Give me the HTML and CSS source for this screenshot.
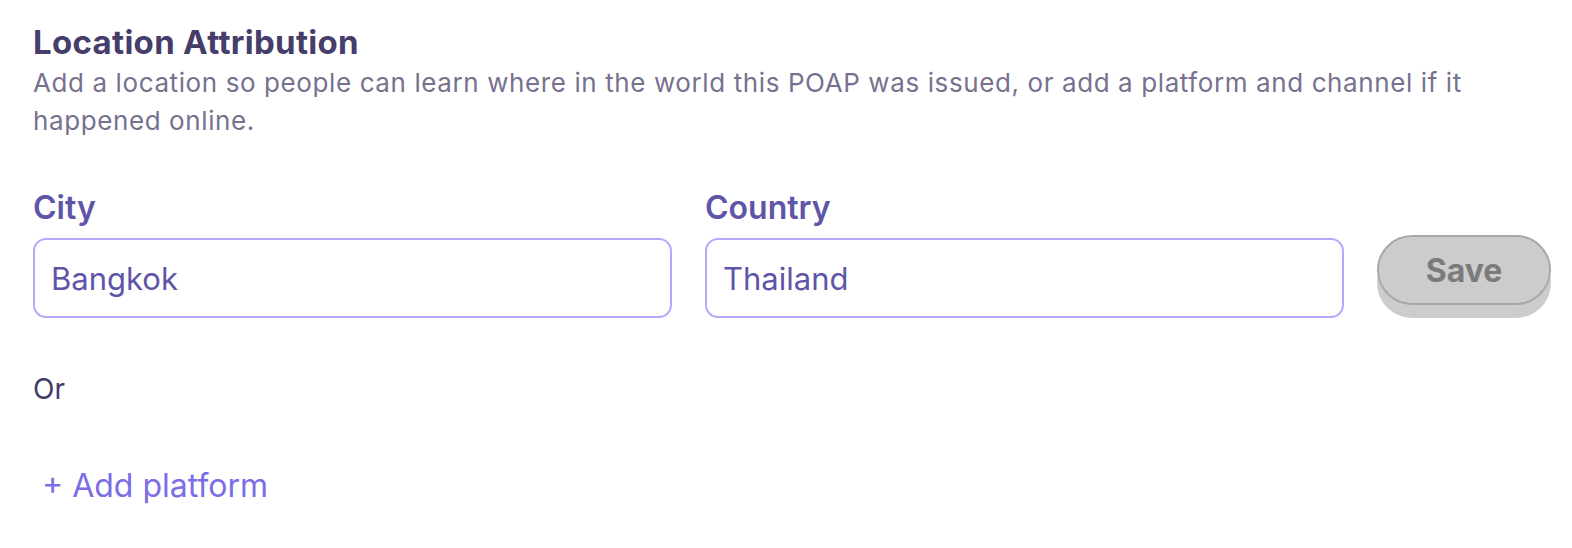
FILE: index.html
```html
<!DOCTYPE html>
<html lang="en">
<head>
<meta charset="utf-8">
<title>Location Attribution</title>
<link rel="stylesheet" href="styles.css">
</head>
<body>
<section class="panel">
  <h2 class="title">Location Attribution</h2>
  <p class="desc">Add a location so people can learn where in the world this POAP was issued, or add a platform and channel if it happened online.</p>
  <div class="row">
    <label class="field">
      <span class="label">City</span>
      <span class="input">Bangkok</span>
    </label>
    <label class="field">
      <span class="label">Country</span>
      <span class="input">Thailand</span>
    </label>
    <button class="save" type="button">Save</button>
  </div>
  <p class="or">Or</p>
  <button class="add" type="button">+ Add platform</button>
</section>
</body>
</html>
```
FILE: styles.css
```css
* { box-sizing: border-box; }
body {
  margin: 0;
  background: #ffffff;
  font-family: Inter, Roboto, "Liberation Sans", sans-serif;
}
.panel {
  padding: 22px 21px 0 33px;
}
.title {
  margin: 0;
  font-size: 33px;
  line-height: 40px;
  font-weight: 700;
  letter-spacing: 0.3px;
  color: #463d6b;
}
.desc {
  margin: 2px 0 0;
  font-size: 26px;
  line-height: 38px;
  letter-spacing: 0.6px;
  color: #77718f;
  max-width: 1500px;
}
.row {
  display: flex;
  align-items: flex-end;
  gap: 33px;
  margin-top: 49px;
}
.field {
  flex: 1;
  display: flex;
  flex-direction: column;
}
.label {
  font-size: 32px;
  line-height: 38px;
  font-weight: 600;
  color: #5e55a8;
  margin-bottom: 11px;
}
.input {
  display: flex;
  align-items: center;
  height: 80px;
  padding-left: 16px;
  border: 2px solid #b4aafc;
  border-radius: 13px;
  font-size: 31px;
  color: #5e55a8;
}
.save {
  flex: none;
  width: 174px;
  height: 70px;
  margin-bottom: 13px;
  border: 2px solid #a8a8a8;
  border-radius: 35px;
  background: #cccccc;
  box-shadow: 0 13px 0 #cccccc;
  font-family: inherit;
  font-size: 32px;
  font-weight: 700;
  color: #7b7b7b;
}
.or {
  margin: 53px 0 0;
  font-size: 28px;
  line-height: 36px;
  color: #3f3966;
}
.add {
  margin-top: 60px;
  padding: 0 9px;
  border: none;
  background: none;
  font-family: inherit;
  font-size: 32px;
  line-height: 38px;
  color: #7a6de6;
}
```
